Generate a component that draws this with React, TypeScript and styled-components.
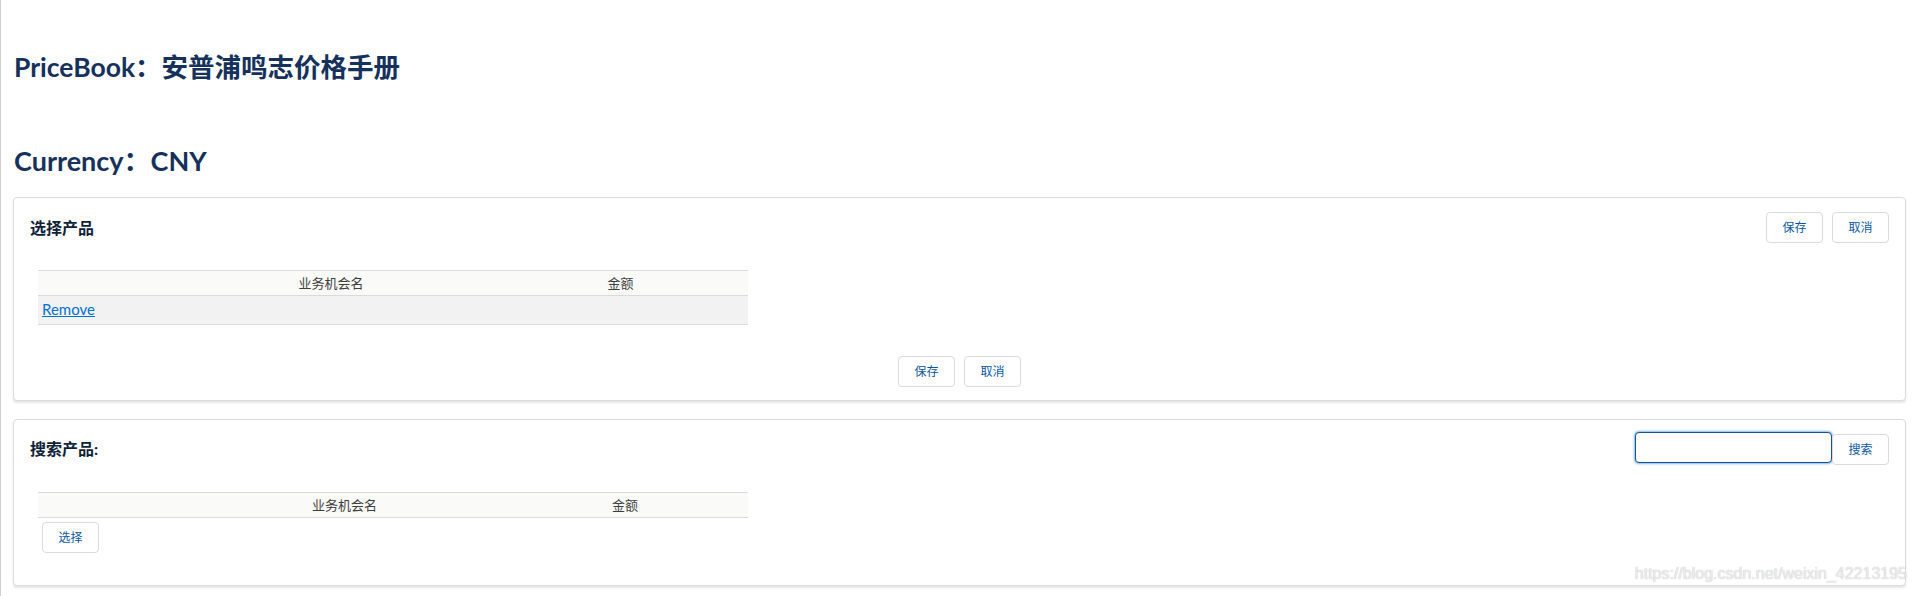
import React from 'react';
import styled, { createGlobalStyle } from 'styled-components';

const GlobalStyle = createGlobalStyle`
	html, body {
		margin: 0;
		padding: 0;
		background: #fff;
	}
	body {
		font-family: Lato, "Noto Sans CJK SC", sans-serif;
		color: #080707;
	}
	* {
		box-sizing: border-box;
	}
`;

const nameColumns = [
	{ title: '', width: 131 },
	{ title: '业务机会名', width: 324 },
	{ title: '金额', width: 255 }
];

const searchColumns = [
	{ title: '', width: 149 },
	{ title: '业务机会名', width: 315 },
	{ title: '金额', width: 246 }
];

export default function App() {
	return (
		<Page>
			<GlobalStyle />
			<BookTitle>PriceBook：安普浦鸣志价格手册</BookTitle>
			<CurrencyTitle>Currency：CNY</CurrencyTitle>

			<Card>
				<CardHeader $top={14}>
					<CardTitle>选择产品</CardTitle>
					<ButtonGroup>
						<Button>保存</Button>
						<Button>取消</Button>
					</ButtonGroup>
				</CardHeader>
				<CardBody>
					<Grid>
						<thead>
							<tr>
								{nameColumns.map((c, i) => (
									<HeadCell key={i} style={{ width: c.width }}>
										{c.title}
									</HeadCell>
								))}
							</tr>
						</thead>
						<tbody>
							<tr>
								<Cell>
									<RemoveLink href="#">Remove</RemoveLink>
								</Cell>
								<Cell />
								<Cell />
							</tr>
						</tbody>
					</Grid>
				</CardBody>
				<CardFooter>
					<ButtonGroup>
						<Button>保存</Button>
						<Button>取消</Button>
					</ButtonGroup>
				</CardFooter>
			</Card>

			<Card>
				<CardHeader $top={12}>
					<CardTitle>搜索产品:</CardTitle>
					<SearchBox>
						<SearchInput type="text" />
						<SearchButton>搜索</SearchButton>
					</SearchBox>
				</CardHeader>
				<CardBody>
					<Grid>
						<thead>
							<tr>
								{searchColumns.map((c, i) => (
									<HeadCell key={i} style={{ width: c.width }}>
										{c.title}
									</HeadCell>
								))}
							</tr>
						</thead>
					</Grid>
					<SelectButton>选择</SelectButton>
				</CardBody>
			</Card>

			<Watermark>https://blog.csdn.net/weixin_42213195</Watermark>
		</Page>
	);
}

const Page = styled.div`
	position: relative;
	min-height: 100vh;
	border-left: 1px solid #cfcfcf;
	padding: 0 10px 1px 12px;
	overflow: hidden;
`;

const BookTitle = styled.h1`
	margin: 49px 0 0 1px;
	font-size: 26.5px;
	line-height: 36px;
	font-weight: 700;
	color: #16325c;
`;

const CurrencyTitle = styled.h2`
	margin: 58px 0 18px 1px;
	font-size: 27px;
	line-height: 36px;
	font-weight: 700;
	color: #16325c;
`;

const Card = styled.section`
	background: #fff;
	border: 1px solid #dddbda;
	border-radius: 4px;
	box-shadow: 0 2px 2px 0 rgba(0, 0, 0, 0.1);

	& + & {
		margin-top: 18px;
	}
`;

const CardHeader = styled.header<{ $top: number }>`
	display: flex;
	align-items: center;
	justify-content: space-between;
	padding: ${p => p.$top}px 16px 0 16px;
`;

const CardTitle = styled.h2`
	margin: 0;
	font-size: 16px;
	line-height: 24px;
	font-weight: 700;
	color: #0f1f3a;
`;

const ButtonGroup = styled.div`
	display: flex;
	gap: 9px;
`;

const Button = styled.button`
	height: 31px;
	padding: 0 15.5px;
	border: 1px solid #dddbda;
	border-radius: 4px;
	background: #fff;
	color: #0a56a3;
	font-family: Lato, "Noto Sans CJK SC", sans-serif;
	font-size: 12px;
	line-height: 29px;
	cursor: pointer;
`;

const SearchBox = styled.div`
	display: flex;
	align-items: flex-start;
`;

const SearchInput = styled.input`
	width: 197px;
	height: 31px;
	padding: 0 8px;
	border: 1px solid #1b5297;
	border-radius: 4px;
	box-shadow: 0 0 3px #0070d2;
	outline: none;
	font-size: 13px;
`;

const SearchButton = styled(Button)`
	margin-top: 2px;
`;

const CardBody = styled.div`
	padding: 27px 0 0 24px;
`;

const Grid = styled.table`
	width: 710px;
	table-layout: fixed;
	border-collapse: separate;
	border-spacing: 0;
	font-size: 13px;
`;

const HeadCell = styled.th`
	padding: 0;
	height: 26px;
	line-height: 24px;
	background: #fafaf9;
	border-top: 1px solid #dddbda;
	border-bottom: 1px solid #dddbda;
	color: #3e3e3c;
	font-weight: 400;
	text-align: center;
`;

const Cell = styled.td`
	padding: 0 0 0 4px;
	height: 28px;
	line-height: 27px;
	background: #f2f2f2;
	border-bottom: 1px solid #dddbda;
`;

const RemoveLink = styled.a`
	color: #0070d2;
	font-size: 15px;
	text-decoration: underline;
`;

const CardFooter = styled.footer`
	display: flex;
	justify-content: center;
	padding: 31px 0 13px;
`;

const SelectButton = styled(Button)`
	display: block;
	margin: 4px 0 32px 4px;
`;

const Watermark = styled.div`
	position: absolute;
	right: 9px;
	bottom: 13px;
	font-family: "Liberation Sans", Arial, sans-serif;
	font-size: 16px;
	line-height: 18px;
	color: rgba(255, 255, 255, 0.75);
	text-shadow: 0 0 1px rgba(0, 0, 0, 0.35);
	pointer-events: none;
`;
